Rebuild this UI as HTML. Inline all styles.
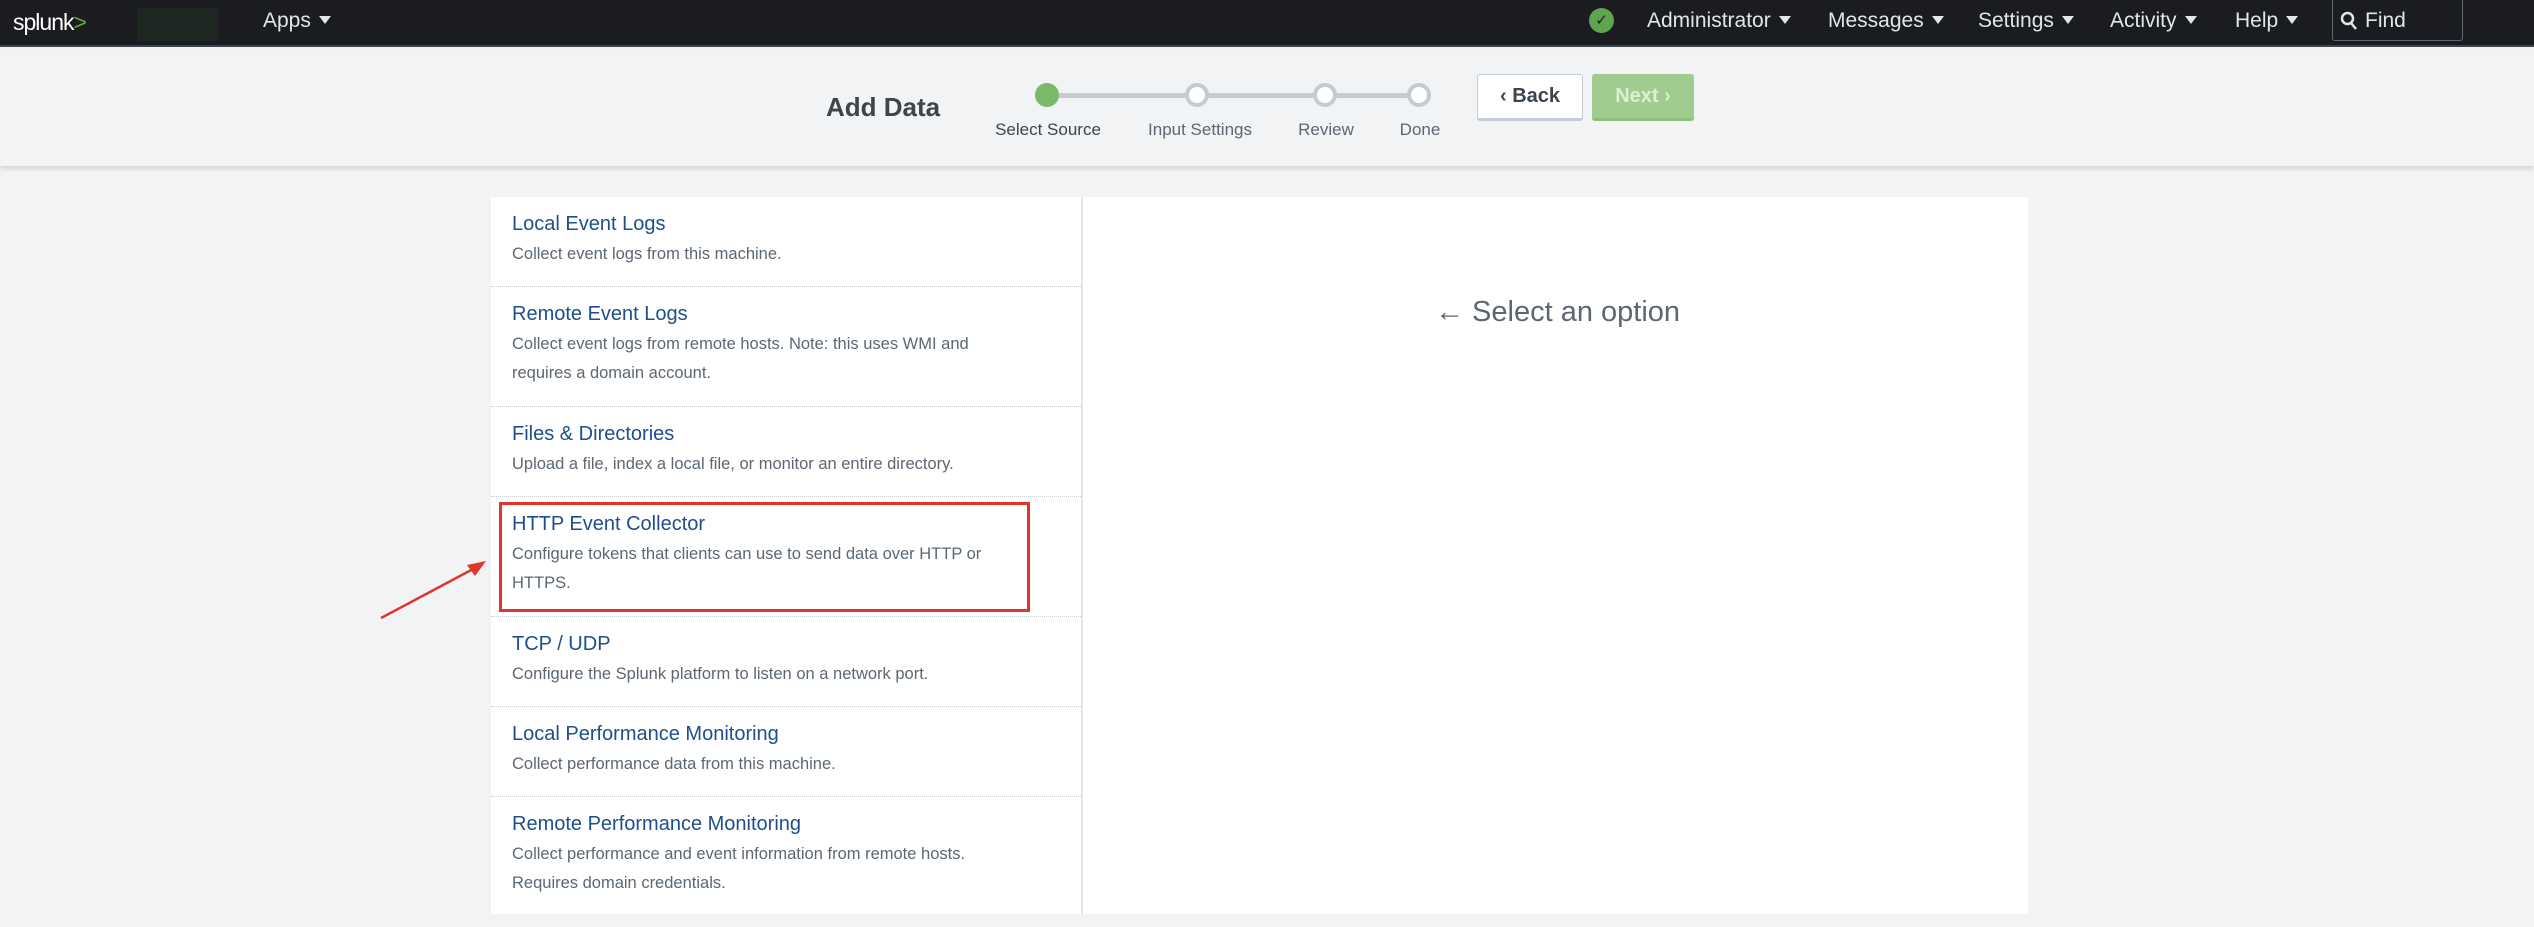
<!DOCTYPE html>
<html><head><meta charset="utf-8"><style>
*{box-sizing:border-box;margin:0;padding:0}
body{width:2534px;height:914px;overflow:hidden;background:#f2f3f5;font-family:"Liberation Sans",sans-serif;position:relative}
.top{position:absolute;left:0;top:0;width:2534px;height:47px;background:#1a1c20;border-bottom:2px solid #3c444d}
.nav{position:absolute;top:9px;color:#e1e6eb;font-size:21px}
.tri{display:inline-block;width:0;height:0;border-left:6px solid transparent;border-right:6px solid transparent;border-top:8px solid #e1e6eb;margin-left:8px;vertical-align:3px}
.hdr{position:absolute;left:0;top:49px;width:2534px;height:117px;background:#f2f3f5;box-shadow:0 3px 4px rgba(0,0,0,.12)}
.circ{position:absolute;width:24px;height:24px;border-radius:50%;background:#fff;border:4px solid #c3cbd4;top:83px}
.lbl{position:absolute;top:120px;font-size:17px;color:#5c6773;transform:translateX(-50%);white-space:nowrap}
.panel{position:absolute;left:491px;top:197px;width:1537px;height:717px;background:#fff}
.row{position:absolute;left:491px;width:590px;border-bottom:1px dotted #c3cbd4}
.t{position:absolute;left:21px;font-size:20px;color:#1e4f8c}
.d{position:absolute;left:21px;font-size:16.5px;color:#5c6773;line-height:29px;width:505px}
</style></head><body>
<div class="top">
 <div style="position:absolute;left:13px;top:9px;color:#fff;font-size:23px;letter-spacing:-1px">splunk<span style="color:#65a637">&gt;</span></div>
 <div style="position:absolute;left:137px;top:8px;width:81px;height:33px;background:#1f2723"></div>
 <div class="nav" style="left:263px">Apps<span class="tri"></span></div>
 <div style="position:absolute;left:1589px;top:8px;width:25px;height:25px;border-radius:50%;background:#5fa450;color:#1a1c20;font-size:15px;text-align:center;line-height:25px">✓</div>
 <div class="nav" style="left:1647px">Administrator<span class="tri"></span></div>
 <div class="nav" style="left:1828px">Messages<span class="tri"></span></div>
 <div class="nav" style="left:1978px">Settings<span class="tri"></span></div>
 <div class="nav" style="left:2110px">Activity<span class="tri"></span></div>
 <div class="nav" style="left:2235px">Help<span class="tri"></span></div>
 <div style="position:absolute;left:2332px;top:0;width:131px;height:41px;border:1px solid #5c6773;border-top:none;border-radius:0 0 3px 3px"></div>
 <svg style="position:absolute;left:2340px;top:11px" width="18" height="20" viewBox="0 0 18 20"><circle cx="7.5" cy="7.5" r="5.5" fill="none" stroke="#e1e6eb" stroke-width="2.5"/><path d="M11 12 L16 18" stroke="#e1e6eb" stroke-width="2.5"/></svg>
 <div class="nav" style="left:2365px">Find</div>
</div>
<div class="hdr"></div>
<div style="position:absolute;left:826px;top:92px;font-size:26px;font-weight:bold;color:#3c444d">Add Data</div>
<div style="position:absolute;left:1047px;top:93px;width:372px;height:5px;background:#c3cbd4"></div>
<div class="circ" style="left:1035px;background:#7cb96b;border-color:#7cb96b"></div>
<div class="circ" style="left:1185px"></div>
<div class="circ" style="left:1313px"></div>
<div class="circ" style="left:1407px"></div>
<div class="lbl" style="left:1048px;color:#3c444d">Select Source</div>
<div class="lbl" style="left:1200px">Input Settings</div>
<div class="lbl" style="left:1326px">Review</div>
<div class="lbl" style="left:1420px">Done</div>
<div style="position:absolute;left:1477px;top:74px;width:106px;height:47px;background:#fff;border:1px solid #c3cbd4;border-bottom:3px solid #c3cbd4;border-radius:3px;font-size:20px;font-weight:bold;color:#3c444d;text-align:center;line-height:42px">‹ Back</div>
<div style="position:absolute;left:1592px;top:74px;width:102px;height:47px;background:#a0cd8f;border-bottom:3px solid #8fbf7e;border-radius:3px;font-size:20px;font-weight:bold;color:#dcefd5;text-align:center;line-height:44px">Next ›</div>
<div class="panel"></div>
<div style="position:absolute;left:1081px;top:197px;width:2px;height:717px;background:#e1e6eb"></div>
<div class="row" style="top:197px;height:90px"><div class="t" style="top:16px">Local Event Logs</div><div class="d" style="top:43px">Collect event logs from this machine.</div></div>
<div class="row" style="top:287px;height:120px"><div class="t" style="top:16px">Remote Event Logs</div><div class="d" style="top:43px">Collect event logs from remote hosts. Note: this uses WMI and requires a domain account.</div></div>
<div class="row" style="top:407px;height:90px"><div class="t" style="top:16px">Files &amp; Directories</div><div class="d" style="top:43px">Upload a file, index a local file, or monitor an entire directory.</div></div>
<div class="row" style="top:497px;height:120px"><div class="t" style="top:16px">HTTP Event Collector</div><div class="d" style="top:43px">Configure tokens that clients can use to send data over HTTP or HTTPS.</div></div>
<div class="row" style="top:617px;height:90px"><div class="t" style="top:16px">TCP / UDP</div><div class="d" style="top:43px">Configure the Splunk platform to listen on a network port.</div></div>
<div class="row" style="top:707px;height:90px"><div class="t" style="top:16px">Local Performance Monitoring</div><div class="d" style="top:43px">Collect performance data from this machine.</div></div>
<div class="row" style="top:797px;height:130px;border:none"><div class="t" style="top:16px">Remote Performance Monitoring</div><div class="d" style="top:43px">Collect performance and event information from remote hosts. Requires domain credentials.</div></div>
<div style="position:absolute;left:499px;top:502px;width:531px;height:110px;border:3px solid #e0352b"></div>
<svg style="position:absolute;left:375px;top:555px" width="120" height="70"><path d="M6 63 L100 13" stroke="#e0352b" stroke-width="2.5"/><path d="M111 6 L92 10 L100 21 Z" fill="#e0352b"/></svg>
<div style="position:absolute;left:1435px;top:296px;font-size:29px;color:#5c6773">← Select an option</div>
</body></html>
